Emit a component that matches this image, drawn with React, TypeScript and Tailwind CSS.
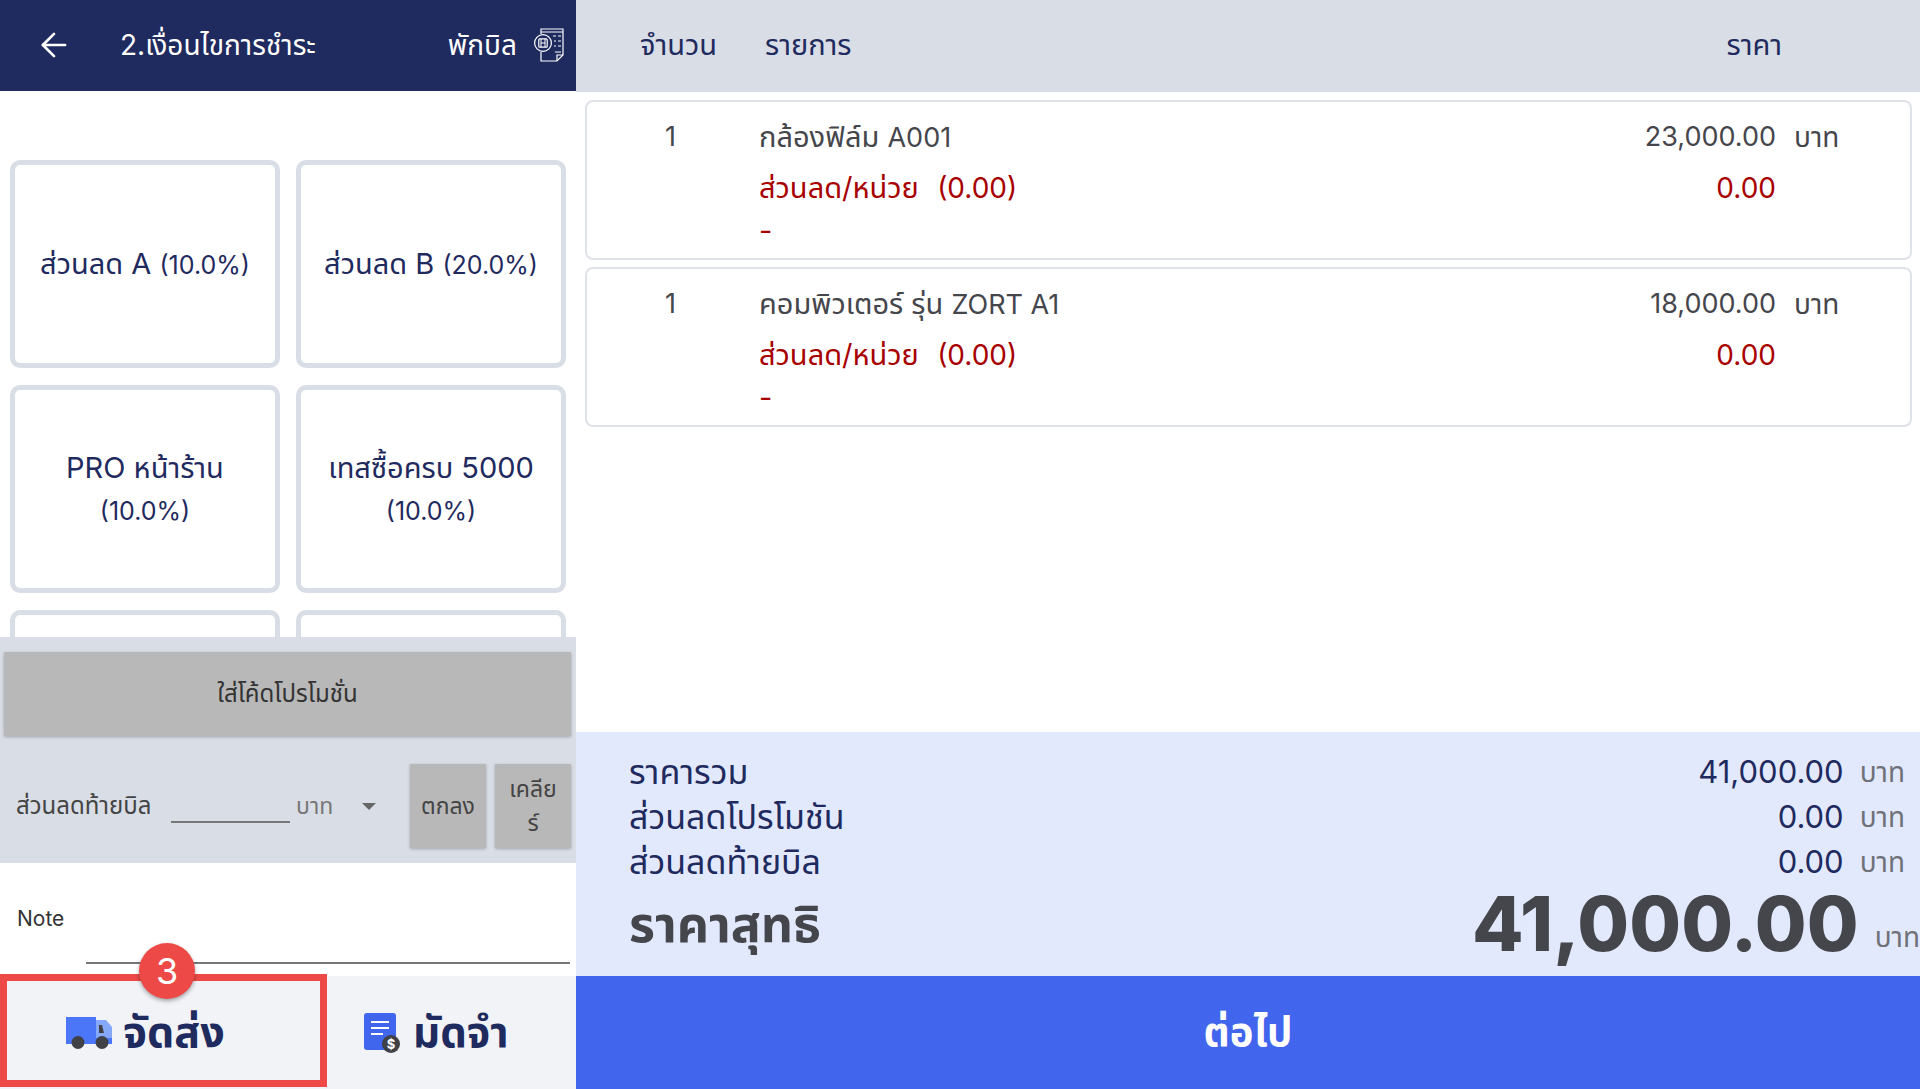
import { ArrowLeft } from "lucide-react";

const FONT = "font-['Inter','Noto_Sans_Thai','Noto_Sans','Liberation_Sans',sans-serif]";

const promos = [
  { name: "ส่วนลด A", pct: "(10.0%)" },
  { name: "ส่วนลด B", pct: "(20.0%)" },
  { name: "PRO หน้าร้าน", pct: "(10.0%)" },
  { name: "เทสซื้อครบ 5000", pct: "(10.0%)" },
  { name: "", pct: "" },
  { name: "", pct: "" },
];

const items = [
  { name: "กล้องฟิล์ม", code: "A001", price: "23,000.00" },
  { name: "คอมพิวเตอร์ รุ่น", code: "ZORT A1", price: "18,000.00" },
];

const totals = [
  { label: "ราคารวม", value: "41,000.00" },
  { label: "ส่วนลดโปรโมชัน", value: "0.00" },
  { label: "ส่วนลดท้ายบิล", value: "0.00" },
];

function HoldBillIcon() {
  return (
    <svg width="30" height="34" viewBox="0 0 30 34" fill="none" stroke="#fff" strokeWidth="1.2">
      <path d="M7 6V1h22v26l-6 6H7v-9" />
      <path d="M7 4h22M23 33v-6h6" />
      <circle cx="9" cy="15" r="8.4" fill="#1f2a5e" />
      <rect x="4.8" y="10.8" width="8.4" height="8.4" rx="1" />
      <path d="M7 19v-8M11 19v-8M7 15h4" strokeWidth="1" />
      <path d="M19 8h3M24 8h3M20 13h2M24 13h3M20 18h2M24 18h3M21 24h6" />
    </svg>
  );
}

function TruckIcon() {
  return (
    <svg width="46" height="32" viewBox="0 0 46 32">
      <rect x="0" y="0" width="30" height="27" fill="#4a76f7" />
      <path d="M30 3h10l6 7v17H30z" fill="#86a8fb" />
      <path d="M33 8h3l2 8h-5z" fill="#3f4146" />
      <rect x="30" y="21" width="16" height="6" fill="#4a76f7" />
      <circle cx="12" cy="25.5" r="6.5" fill="#3f4146" />
      <circle cx="36" cy="25.5" r="6.5" fill="#3f4146" />
    </svg>
  );
}

function DepositIcon() {
  return (
    <svg width="36" height="40" viewBox="0 0 36 40">
      <rect x="0" y="0" width="32" height="37" rx="3" fill="#3f66ec" />
      <path d="M7 9h18M7 15h18M7 21h12" stroke="#fff" strokeWidth="2" />
      <circle cx="27" cy="31" r="9" fill="#3f4146" />
      <text x="27" y="35.5" textAnchor="middle" fontSize="13" fontWeight="700" fill="#fff">$</text>
    </svg>
  );
}

export default function App() {
  return (
    <div className={`${FONT} flex h-[1089px] w-[1920px] overflow-hidden bg-white`}>
      {/* left panel */}
      <div className="relative flex w-[576px] shrink-0 flex-col">
        <div className="flex h-[91px] shrink-0 items-center bg-[#1f2a5e] pb-[2px] pl-[35px] pr-[12px] text-white">
          <ArrowLeft className="h-[38px] w-[38px]" strokeWidth={1.7} />
          <span className="ml-[47px] text-[28px]">2.เงื่อนไขการชำระ</span>
          <span className="ml-auto mr-[17px] text-[28px]">พักบิล</span>
          <HoldBillIcon />
        </div>

        {/* promo grid, last row is cut off by the gray block */}
        <div className="h-[546px] shrink-0 overflow-hidden pl-[10px] pr-[10px] pt-[69px]">
          <div className="grid grid-cols-2 gap-x-[16px] gap-y-[17px]">
            {promos.map((promo, i) => (
              <div
                key={i}
                className="flex h-[208px] items-center justify-center rounded-[10px] border-[5px] border-[#d9dde6] px-[12px] text-center text-[#1f2a5e]"
              >
                <div className="text-[29px] leading-[42px]">
                  {promo.name} <span className="text-[25px]">{promo.pct}</span>
                </div>
              </div>
            ))}
          </div>
        </div>

        <div className="flex h-[226px] shrink-0 flex-col bg-[#d9dde6] pl-[4px] pr-[5px] pt-[15px]">
          <div className="flex h-[84px] items-center justify-center bg-[#b8b8b8] text-[24px] text-[#333] shadow-[0_1px_3px_rgba(0,0,0,0.25)]">
            ใส่โค้ดโปรโมชั่น
          </div>
          <div className="mt-[28px] flex h-[84px] items-center text-[#444]">
            <span className="ml-[12px] w-[155px] text-[24px]">ส่วนลดท้ายบิล</span>
            <div className="h-[34px] w-[119px] border-b-2 border-[#777]" />
            <span className="ml-[6px] w-[66px] text-[23px] text-[#777]">บาท</span>
            <div className="h-0 w-0 border-x-[7px] border-t-[7px] border-x-transparent border-t-[#666]" />
            <div className="ml-auto flex gap-[9px]">
              <div className="flex h-[84px] w-[76px] items-center justify-center bg-[#b8b8b8] text-[23px] shadow-[0_1px_3px_rgba(0,0,0,0.25)]">
                ตกลง
              </div>
              <div className="flex h-[84px] w-[76px] items-center justify-center bg-[#b8b8b8] text-center text-[23px] leading-[34px] shadow-[0_1px_3px_rgba(0,0,0,0.25)]">
                <span>
                  เคลีย
                  <br />
                  ร์
                </span>
              </div>
            </div>
          </div>
        </div>

        <div className="h-[113px] shrink-0 pl-[17px] pr-[6px] pt-[43px]">
          <div className="text-[21px] leading-[26px] text-[#333]">Note</div>
          <div className="ml-[69px] mt-[30px] border-b-2 border-[#777]" />
        </div>

        <div className="flex h-[113px] shrink-0 bg-[#f2f3f7]">
          <div className="flex w-[328px] items-center gap-[11px] pl-[66px] text-[43px] font-bold text-[#1f2a5e]">
            <TruckIcon />
            <span className="mb-[3px]">จัดส่ง</span>
          </div>
          <div className="flex flex-1 items-center gap-[13px] pl-[36px] text-[42px] font-bold text-[#1f2a5e]">
            <DepositIcon />
            <span className="mb-[3px]">มัดจำ</span>
          </div>
        </div>

        {/* callout over the shipping button */}
        <div className="pointer-events-none absolute bottom-[2px] left-0 h-[113px] w-[327px] border-[7px] border-[#ed4a47]" />
        <div className="absolute left-[139px] top-[943px] flex h-[56px] w-[56px] items-center justify-center rounded-full bg-[#ed4a47] text-[36px] text-white shadow-[0_2px_4px_rgba(0,0,0,0.35)]">
          3
        </div>
      </div>

      {/* right panel */}
      <div className="flex min-w-0 flex-1 flex-col">
        <div className="flex h-[92px] shrink-0 items-center bg-[#d9dde6] pb-[2px] pl-[64px] pr-[138px] text-[29px] text-[#1f2a5e]">
          <span className="w-[125px]">จำนวน</span>
          <span>รายการ</span>
          <span className="ml-auto">ราคา</span>
        </div>

        <div className="flex flex-1 flex-col gap-[7px] pl-[9px] pr-[8px] pt-[8px]">
          {items.map((item) => (
            <div
              key={item.name}
              className="flex h-[160px] flex-col rounded-[8px] border-2 border-[#dfe2e7] pl-[172px] pr-[70px] pt-[19px] text-[29px] leading-[32px]"
            >
              <div className="relative flex text-[#45464c]">
                <span className="absolute left-[-94px] text-[27px]">1</span>
                <span>
                  {item.name} <span className="text-[27px]">{item.code}</span>
                </span>
                <span className="ml-auto text-[27px]">{item.price}</span>
                <span className="w-[64px] pl-[18px] text-[28px] whitespace-nowrap">บาท</span>
              </div>
              <div className="mt-[18px] flex text-[#a80000]">
                <span>
                  ส่วนลด/หน่วย &nbsp;<span className="ml-[2px] text-[28px]">(0.00)</span>
                </span>
                <span className="ml-auto mr-[64px] text-[28px]">0.00</span>
              </div>
              <div className="mt-[11px] text-[#a80000]">-</div>
            </div>
          ))}
        </div>

        <div className="flex h-[244px] shrink-0 flex-col bg-[#e2e9fc] pl-[53px] pt-[17px]">
          {totals.map((row) => (
            <div key={row.label} className="flex h-[45px] items-center pr-[15px] text-[31px] text-[#1f2a5e]">
              <span className="text-[34px]">{row.label}</span>
              <span className="ml-auto pt-[2px]">{row.value}</span>
              <span className="ml-[16px] text-[28px] text-[#6f7178]">บาท</span>
            </div>
          ))}
          <div className="-mt-[4px] flex items-center text-[#45464c]">
            <span className="text-[50px] font-bold">ราคาสุทธิ</span>
            <span className="ml-auto text-[75px] font-extrabold leading-[88px]">41,000.00</span>
            <span className="ml-[16px] mt-[26px] whitespace-nowrap text-[28px] font-normal text-[#6f7178]">บาท</span>
          </div>
        </div>

        <div className="flex h-[113px] shrink-0 items-center justify-center bg-[#4165ec] pb-[2px] text-[40px] font-bold text-white">
          ต่อไป
        </div>
      </div>
    </div>
  );
}
